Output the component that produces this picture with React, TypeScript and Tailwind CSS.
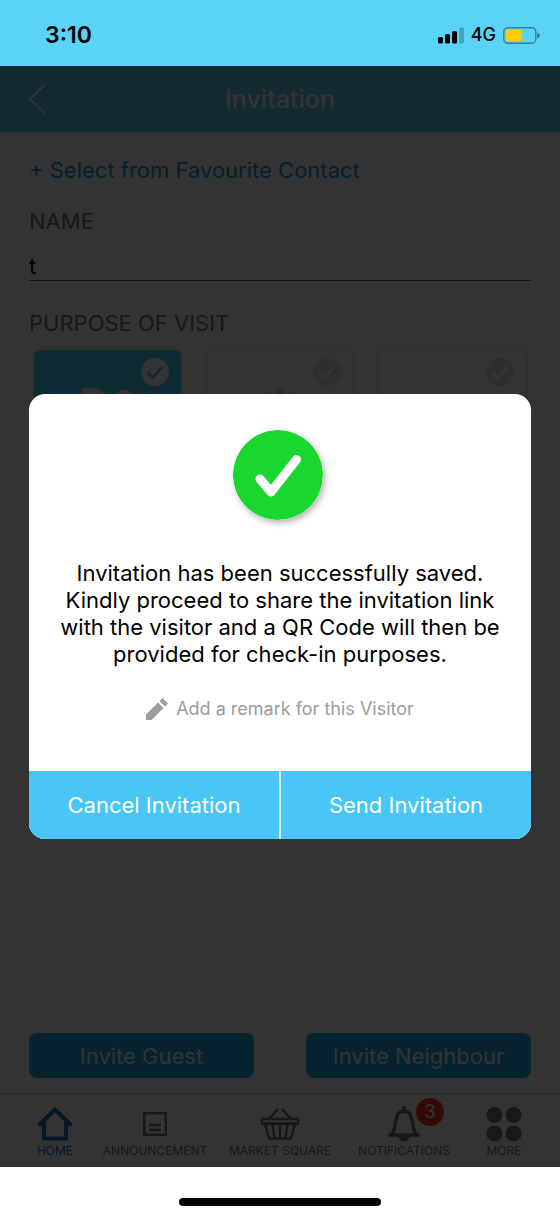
import React, { useState } from "react";
import clsx from "clsx";

const CheckMark = ({ className }: { className?: string }) => (
  <svg viewBox="0 0 28 28" className={className} fill="none" stroke="currentColor" strokeWidth="3.2">
    <path d="M6.5 14.5 L11.5 19.5 L21.5 9" />
  </svg>
);

const VisitorIcon = () => (
  <svg viewBox="0 0 70 60" className="h-[60px] w-[70px]" fill="currentColor">
    <path d="M6 12 C7 7 9 5 11 3 L9 0 C14 1 16 0 20 0 C26 0 30 3 34 8 C34 20 28 27 21 27 C13 27 8 20 6 12 Z" />
    <circle cx="52" cy="13" r="11" />
    <path d="M0 58 C0 40 10 32 21 32 C32 32 41 40 41 58 Z M45 58 C45 46 43 38 38 31 C42 28 47 27 51 27 C62 27 70 36 70 58 Z" />
  </svg>
);

const ServiceIcon = () => (
  <svg viewBox="0 0 70 60" className="h-[60px] w-[70px] text-[#d6d6d6]" fill="currentColor">
    <ellipse cx="35" cy="6" rx="5" ry="9" />
    <path d="M22 3 L28 9 L33 14 H37 L42 9 L48 3 L51 12 L44 20 L50 34 H20 L26 20 L19 12 Z" />
    <rect x="14" y="38" width="42" height="18" rx="4" />
  </svg>
);

const purposes = [
  { id: "visitor", label: "Visitor", icon: <VisitorIcon /> },
  { id: "service", label: "Service", icon: <ServiceIcon /> },
  { id: "other", label: "Other", icon: null },
];

const HomeIcon = () => (
  <svg viewBox="0 0 36 36" className="size-9" fill="none" stroke="currentColor" strokeWidth="4">
    <path d="M1.5 19.5 L18 3.5 L34.5 19.5" />
    <path d="M7 16 V32.5 H29 V16" />
  </svg>
);

const AnnouncementIcon = () => (
  <svg viewBox="0 0 36 36" className="size-9" fill="none" stroke="currentColor" strokeWidth="2.4">
    <rect x="7.2" y="7.2" width="21.6" height="21.6" />
    <path d="M12 19 H24 M12 24 H24" />
  </svg>
);

const MarketIcon = () => (
  <svg viewBox="0 0 40 36" className="h-9 w-10" fill="none" stroke="currentColor" strokeWidth="2.6" strokeLinejoin="round">
    <path d="M9 13 L18 3 M31 13 L22 3" />
    <rect x="2" y="13" width="36" height="4.6" />
    <path d="M5 18 L9 32.5 H31 L35 18" />
    <path d="M12.5 18 L14.5 32 M20 18 V32 M27.5 18 L25.5 32" />
  </svg>
);

const BellIcon = () => (
  <svg viewBox="0 0 36 36" className="size-9" fill="none" stroke="currentColor" strokeWidth="3.4">
    <path d="M2.5 29 H33.5" />
    <path d="M5.5 28.5 C9 24 9 20 10 14 C11 8 14 5 18 5 C22 5 25 8 26 14 C27 20 27 24 30.5 28.5" />
    <path d="M18 1.5 V6" strokeLinecap="round" />
    <path d="M12.5 30 A5.5 5.5 0 0 0 23.5 30 Z" fill="currentColor" stroke="none" />
  </svg>
);

const MoreIcon = () => (
  <svg viewBox="0 0 36 36" className="size-9" fill="currentColor">
    <circle cx="8.5" cy="9" r="8" />
    <circle cx="27.5" cy="9" r="8" />
    <circle cx="8.5" cy="27.5" r="8" />
    <circle cx="27.5" cy="27.5" r="8" />
  </svg>
);

const tabs = [
  { label: "HOME", icon: <HomeIcon />, active: true },
  { label: "ANNOUNCEMENT", icon: <AnnouncementIcon /> },
  { label: "MARKET SQUARE", icon: <MarketIcon /> },
  { label: "NOTIFICATIONS", icon: <BellIcon />, badge: 3 },
  { label: "MORE", icon: <MoreIcon /> },
];

function StatusBar() {
  return (
    <div className="flex h-[66px] items-center justify-between bg-[#5ad3f7] pr-5 pl-[45px] pt-1 text-black">
      <span className="text-[23px] leading-6 font-semibold">3:10</span>
      <div className="flex items-center gap-[7px]">
        <svg viewBox="0 0 26 17" className="h-[17px] w-[26px]">
          <rect x="0" y="10" width="5" height="6.5" rx="1.5" />
          <rect x="7" y="7" width="5" height="9.5" rx="1.5" />
          <rect x="14" y="4" width="5" height="12.5" rx="1.5" />
          <rect x="21" y="0.5" width="5" height="16" rx="1.5" opacity="0.22" />
        </svg>
        <span className="text-[18px] leading-5 font-medium">4G</span>
        <svg viewBox="0 0 37 17" className="h-[17px] w-[37px]">
          <rect x="0.8" y="0.8" width="32" height="15.4" rx="4" fill="none" stroke="#000" strokeOpacity="0.4" strokeWidth="1.4" />
          <rect x="2.8" y="2.8" width="16" height="11.4" rx="2" fill="#ffcc00" />
          <path d="M34.3 5.5 Q36.8 6.5 36.8 8.5 Q36.8 10.5 34.3 11.5 Z" fillOpacity="0.45" />
        </svg>
      </div>
    </div>
  );
}

function InviteForm() {
  const [name, setName] = useState("t");
  const [purpose, setPurpose] = useState("visitor");

  return (
    <form className="flex flex-1 flex-col px-[29px] pt-6 pb-[15px]">
      <a href="#favourites" className="text-[22px] leading-7 text-[#1c9ad6]">
        + Select from Favourite Contact
      </a>
      <label htmlFor="name" className="mt-[23px] text-[22px] leading-7 text-[#77787b]">
        NAME
      </label>
      <input
        id="name"
        value={name}
        onChange={(e) => setName(e.target.value)}
        className="mt-4 h-[30px] w-full border-b border-[#55565a] text-[22px] leading-7 text-black outline-none"
      />
      <fieldset className="mt-7">
        <legend className="text-[22px] leading-7 text-[#77787b]">PURPOSE OF VISIT</legend>
        <div className="mt-[13px] grid grid-cols-3 gap-[26px] px-[5px]">
          {purposes.map((item) => {
            const selected = purpose === item.id;
            return (
              <label
                key={item.id}
                className={clsx(
                  "relative flex h-[150px] flex-col items-center rounded-md pt-[38px] shadow-[0_0_5px_rgba(0,0,0,0.2)]",
                  selected ? "bg-[#46d3ff] text-white" : "bg-white text-gray-500"
                )}
              >
                <input
                  type="radio"
                  name="purpose"
                  checked={selected}
                  onChange={() => setPurpose(item.id)}
                  className={clsx(
                    "absolute top-2 right-3 size-7 appearance-none rounded-full",
                    selected ? "bg-white" : "bg-[#e4e4e4]"
                  )}
                />
                <CheckMark
                  className={clsx(
                    "pointer-events-none absolute top-2 right-3 size-7",
                    selected ? "text-[#46d3ff]" : "text-white"
                  )}
                />
                {item.icon}
                <span className="mt-3 text-base">{item.label}</span>
              </label>
            );
          })}
        </div>
      </fieldset>
      <div className="mt-auto grid grid-cols-2 gap-[52px]">
        <button type="button" className="h-[45px] rounded-lg bg-[#23afeb] text-[22px] leading-7 text-white">
          Invite Guest
        </button>
        <button type="button" className="h-[45px] rounded-lg bg-[#23afeb] text-[22px] leading-7 text-white">
          Invite Neighbour
        </button>
      </div>
    </form>
  );
}

function TabBar() {
  return (
    <nav className="grid h-[74px] grid-cols-[minmax(0,110fr)_minmax(0,90fr)_minmax(0,160fr)_minmax(0,88fr)_minmax(0,112fr)] border-t border-[#c0c0c4] pt-3">
      {tabs.map((tab) => (
        <button
          key={tab.label}
          type="button"
          className={clsx(
            "flex flex-col items-center whitespace-nowrap",
            tab.active ? "text-[#1f76c4]" : "text-[#77787b]"
          )}
        >
          <span className="relative">
            {tab.icon}
            {tab.badge && (
              <span className="absolute -top-2 -right-[22px] flex size-7 items-center justify-center rounded-full bg-[#ff3b21] text-lg text-white">
                {tab.badge}
              </span>
            )}
          </span>
          <span className="text-xs leading-[18px]">{tab.label}</span>
        </button>
      ))}
    </nav>
  );
}

function SavedDialog() {
  return (
    <div
      role="dialog"
      aria-modal="true"
      className="flex w-full flex-col overflow-hidden rounded-2xl bg-white text-center"
    >
      <div className="flex flex-col items-center px-6 pt-9 pb-[49px]">
        <svg viewBox="0 0 90 90" className="mr-1 size-[90px] rounded-full shadow-[2px_3px_6px_rgba(0,0,0,0.3)]">
          <circle cx="45" cy="45" r="45" fill="#19d72f" />
          <path
            d="M27 49 L38 62 L63.5 29.5"
            fill="none"
            stroke="#fff"
            strokeWidth="9"
            strokeLinecap="round"
            strokeLinejoin="round"
          />
        </svg>
        <p className="mt-10 text-[22px] leading-[27px] text-black">
          Invitation has been successfully saved.
          <br />
          Kindly proceed to share the invitation link
          <br />
          with the visitor and a QR Code will then be
          <br />
          provided for check-in purposes.
        </p>
        <button type="button" className="mt-[27px] flex items-center gap-2 text-[18px] leading-[27px] text-[#9b9c9f]">
          <svg viewBox="0 0 22 22" className="size-[22px]" fill="currentColor">
            <path d="M0 22 V16.5 L12 4.5 L17.5 10 L5.5 22 Z" />
            <path d="M13.5 3 L16.5 0 L22 5.5 L19 8.5 Z" />
          </svg>
          Add a remark for this Visitor
        </button>
      </div>
      <div className="grid grid-cols-2 gap-0.5 bg-[#d5f1fd]">
        <button type="button" className="h-[68px] bg-[#49c5f8] text-[22px] leading-7 text-white">
          Cancel Invitation
        </button>
        <button type="button" className="h-[68px] bg-[#49c5f8] text-[22px] leading-7 text-white">
          Send Invitation
        </button>
      </div>
    </div>
  );
}

export default function App() {
  return (
    <div className="flex min-h-screen flex-col bg-white font-['Inter',sans-serif]">
      <StatusBar />
      <main className="relative flex flex-1 flex-col">
        <header className="grid h-[66px] grid-cols-[1fr_auto_1fr] items-center bg-[#5ad3f7] px-[28px] text-white">
          <button type="button" aria-label="Back" className="w-[18px]">
            <svg viewBox="0 0 18 30" className="h-[30px] w-[18px]" fill="none" stroke="currentColor" strokeWidth="2">
              <path d="M16.5 1 L2 15 L16.5 29" />
            </svg>
          </button>
          <h1 className="text-[25px] leading-8 font-medium">Invitation</h1>
        </header>
        <InviteForm />
        <TabBar />
        <div className="absolute inset-0 flex items-center bg-black/80 px-[29px]">
          <SavedDialog />
        </div>
      </main>
      <footer className="flex h-[51px] items-end justify-center pb-3">
        <div className="h-2 w-[36%] rounded-full bg-black" />
      </footer>
    </div>
  );
}
